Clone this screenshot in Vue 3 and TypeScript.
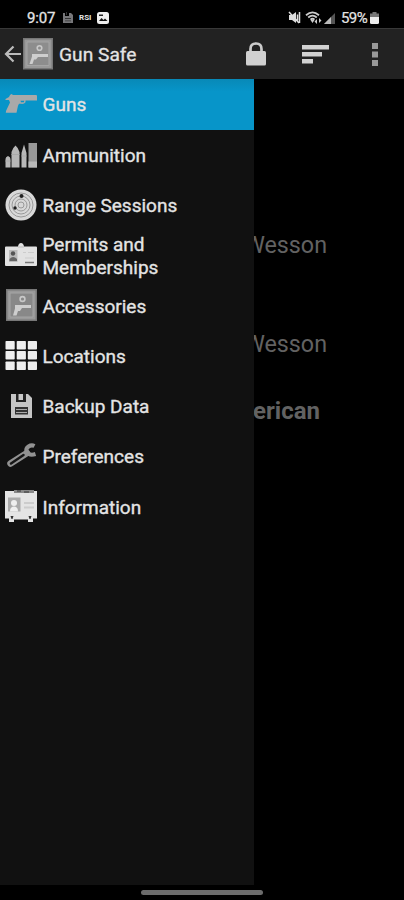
<script setup lang="ts">
interface MenuItem {
  label: string
  icon: string
}

const menu: MenuItem[] = [
  { label: 'Guns', icon: 'gun' },
  { label: 'Ammunition', icon: 'ammo' },
  { label: 'Range Sessions', icon: 'target' },
  { label: 'Permits and Memberships', icon: 'permit' },
  { label: 'Accessories', icon: 'safe' },
  { label: 'Locations', icon: 'grid' },
  { label: 'Backup Data', icon: 'disk' },
  { label: 'Preferences', icon: 'wrench' },
  { label: 'Information', icon: 'info' },
]
const active = 'Guns'
const columns = [0.5, 11.7, 22.8]
const rows = [1, 11, 21.5]
</script>

<template>
  <div class="screen">
    <header class="status">
      <span class="clock">9:07</span>
      <svg class="s-disk" width="10" height="11" viewBox="0 0 10 11"><path d="M0 1h2v3h4V1h2l2 2v8H0z" fill="#77777a" /><path d="M3 0h1v3H3zM2 6h6v1H2zM2 8.500h6v.8H2z" fill="#333" /></svg>
      <span class="rsi">RSI</span>
      <svg class="s-pic" width="12" height="12" viewBox="0 0 12 12"><rect width="12" height="12" rx="2.500" fill="#eee" /><path d="M2 9l2.500-3 2 2 1.500-1.500L10.500 9z" fill="#111" /><rect x="2" y="2.500" width="4" height="1.500" fill="#222" /></svg>
      <span class="grow"></span>
      <svg width="13" height="13" viewBox="0 0 13 13"><path d="M1 4h3l4-3v11L4 9H1z" fill="#ddd" /><path d="M1 1l10 11M9.500 3.500v6M11.500 1v11" stroke="#ddd" stroke-width="1.500" /></svg>
      <svg class="s-wifi" width="17" height="13" viewBox="0 0 17 13"><path d="M1 4.200Q7.500-1.500 14 4.200M3.200 6.500q4.300-3.800 8.600 0M5.500 8.700q2-1.800 4 0" fill="none" stroke="#ccc" stroke-width="1.800" /><path d="M7.500 12L5.500 9h4zM12 8v5l-2.500-2.500zM14 12V7l2.500 2.500z" fill="#ccc" /></svg>
      <svg class="s-cell" width="11" height="12" viewBox="0 0 11 12"><path d="M0 12L11 1v11z" fill="#555" /><path d="M0 12l7-7v7z" fill="#bbb" /></svg>
      <span class="percent">59%</span>
      <svg class="s-bat" width="9" height="12" viewBox="0 0 9 12"><path d="M2.500 0h4v1.500H9V6H0V1.500h2.500z" fill="#777" /><path d="M0 5h9v5.500Q9 12 7.500 12h-6Q0 12 0 10.500z" fill="#eee" /></svg>
    </header>

    <nav class="appbar">
      <svg class="back" width="17" height="18" viewBox="0 0 17 18"><path d="M17 9H2M9.500 1.500L2 9l7.500 7.500" fill="none" stroke="#bbb" stroke-width="2.200" /></svg>
      <svg class="logo" width="30" height="32" viewBox="0 0 30 32">
        <rect width="30" height="31.500" fill="#777" /><rect x="1.500" y="1.500" width="27" height="28.500" fill="#999" /><path d="M4 27.500V4h22v23.500z" fill="#8d8d8d" stroke="#a5a5a5" />
        <circle cx="16.500" cy="10" r="2.300" fill="none" stroke="#c8c8c8" stroke-width="1.600" /><path d="M9 16h16v3H15l-2 2.500h-2L9.500 26H6.500L9 18.500z" fill="#cecece" />
      </svg>
      <h1>Gun Safe</h1>
      <span class="grow"></span>
      <svg class="lock" width="20" height="24" viewBox="0 0 20 24"><path d="M4.500 11V7Q4.500 1.500 10 1.500T15.500 7v4" fill="none" stroke="#ccc" stroke-width="2.700" /><rect y="9" width="20" height="14.500" rx="1.500" fill="#d0d0d0" /></svg>
      <svg class="sort" width="27" height="19" viewBox="0 0 27 19"><path d="M0 0h27v4.500H0zM0 7h20v4.500H0zM0 14h11v4.500H0z" fill="#d2d2d2" /></svg>
      <svg class="dots" width="6" height="23" viewBox="0 0 6 23"><path d="M0 0h6v6H0zM0 8.500h6v6H0zM0 17h6v6H0z" fill="#999" /></svg>
    </nav>

    <main class="body">
      <ul class="drawer">
        <li v-for="item in menu" :key="item.label" :class="{ active: item.label === active }">
          <svg class="icon" width="32" height="32" viewBox="0 0 32 32">
            <template v-if="item.icon === 'gun'">
              <path d="M5 7l1.500-1 1.500 1h23.500l.5 1v4.500H20.500v1.800q-1.500 2-4.500 1.500h-2l-1 2-1.500 7H.8l.3-2L5 14.500 4 12H.5v-1L4 9z" fill="#a9a9a9" /><path d="M15.500 12.700h3.800l-.5 1.600H16z" fill="#0795c9" />
            </template>
            <template v-else-if="item.icon === 'ammo'">
              <path d="M.5 28.500V20q0-2 2.500-3 2.500 1 2.500 3v8.500zM6.500 28.500V13q1-4 4-6.500 3 2.500 4 6.500v15.500zM16.500 28.500V14L19 5.500 21.500 14v14.500z" fill="#b8b8b8" /><rect x="23.500" y="4" width="8.500" height="24.500" fill="#989898" /><path d="M23.500 22.500H32v6h-8.500z" fill="#b9b9b9" /><path d="M.5 22h5M6.500 15.500h8M16.500 17h5" stroke="#aaa" />
            </template>
            <template v-else-if="item.icon === 'target'">
              <circle cx="16" cy="16" r="15.500" fill="#d8d8d8" /><g fill="none" stroke="#999" stroke-width="1"><circle cx="16" cy="16" r="12" /><circle cx="16" cy="16" r="9" /><circle cx="16" cy="16" r="6" /><circle cx="16" cy="16" r="3" /></g><circle cx="16.500" cy="7" r="2" fill="#222" /><circle cx="10" cy="19" r="1.700" fill="#222" />
            </template>
            <template v-else-if="item.icon === 'permit'">
              <path d="M0 8.500q0-1 1-1h12Q13.500 4 16 4t3 3.500h12q1 0 1 1V26q0 1-1 1H1q-1 0-1-1z" fill="#e2e2e2" /><path d="M13 8h6" stroke="#bbb" /><rect x="4" y="11" width="8.500" height="12" fill="#bbb" /><circle cx="8" cy="14.500" r="2.200" fill="#555" /><path d="M4.500 22v-2q3.500-4 7.500 0v2z" fill="#666" /><path d="M18 13.500h3M23 13.500h6M20 19h9" stroke="#ccc" /><path d="M20 23.500h9" stroke="#777" stroke-width="1.500" />
            </template>
            <template v-else-if="item.icon === 'safe'">
              <rect x="1" width="31" height="32" fill="#777" /><rect x="2.500" y="1.500" width="28" height="29" fill="#999" /><path d="M5 28V4h23v24z" fill="#888" stroke="#a5a5a5" /><circle cx="17.500" cy="10" r="2.400" fill="none" stroke="#c8c8c8" stroke-width="1.600" /><path d="M10 16h16v3h-9l-2 3h-2l-1.500 4.500H8l2-7z" fill="#cecece" />
            </template>
            <template v-else-if="item.icon === 'grid'">
              <template v-for="y in rows" :key="y"><rect v-for="x in columns" :key="x" :x="x" :y="y" width="9.200" height="8.500" rx=".8" fill="#eee" /></template>
            </template>
            <template v-else-if="item.icon === 'disk'">
              <path d="M6 4h17l4 4v20H6z" fill="#c5c5c5" /><path d="M11 4h10v8H11z" fill="#222" /><path d="M13.500 4h4.500v6h-4.500z" fill="#c9c9c9" /><path d="M10 17h13v7.500H10z" fill="#333" /><path d="M11 19.500h11M11 22.500h11" stroke="#aaa" />
            </template>
            <template v-else-if="item.icon === 'wrench'">
              <path d="M5.500 23.500L22 13" stroke="#929292" stroke-width="6.500" stroke-linecap="round" /><path d="M6 23.500l12.500-8.500" stroke="#151515" stroke-width="2.500" stroke-linecap="round" /><path d="M29.500 6q-3-1.500-6 .5t-2 5.500q3 4 9 2" fill="none" stroke="#929292" stroke-width="4" />
            </template>
            <template v-else>
              <path d="M0 1h32v27.500h-4V32h-5v-2.500H9V32H4v-3.500H0z" fill="#e4e4e4" /><path d="M9 0h20v3H9z" fill="#888" /><path d="M12 1h4M19 2h5" stroke="#333" /><rect x="3" y="7.500" width="12.500" height="14" fill="#aaa" /><circle cx="9" cy="13" r="3" fill="#eee" /><path d="M5 21.500q0-5 4-5t4 5z" fill="#eee" /><path d="M19 13h10M19 17.500h10" stroke="#ccc" stroke-width="2" /><path d="M5.500 26h3l-1 3h-1zM23.500 26h3l-1 3h-1z" fill="#333" />
            </template>
          </svg>
          <span>{{ item.label }}</span>
        </li>
      </ul>
      <section class="list">
        <p>Wesson</p>
        <p>Wesson</p>
        <p class="bold">erican</p>
      </section>
    </main>
    <footer class="home"><i></i></footer>
  </div>
</template>

<style>
body {
  background: #000;
}
</style>

<style scoped>
.screen {
  width: 404px;
  height: 900px;
  overflow: hidden;
  display: flex;
  flex-direction: column;
  background: #000;
  font-family: Roboto, 'Liberation Sans', sans-serif;
  color: #e4e4e4;
}
.grow {
  flex: 1;
}
.status {
  height: 28px;
  box-sizing: border-box;
  padding: 7px 25px 0 27px;
  display: flex;
  align-items: center;
}
.clock {
  width: 29px;
  font-size: 15px;
  letter-spacing: -0.2px;
  white-space: nowrap;
  -webkit-text-stroke: 0.3px;
}
.s-disk {
  margin-left: 7px;
}
.rsi {
  width: 13px;
  margin-left: 6px;
  font-size: 8px;
  font-weight: 700;
}
.s-pic {
  margin-left: 5px;
}
.s-wifi {
  margin-left: 4px;
}
.s-cell {
  margin-left: 2px;
}
.percent {
  width: 27px;
  margin-left: 6px;
  font-size: 15px;
  letter-spacing: -0.6px;
  -webkit-text-stroke: 0.2px;
}
.s-bat {
  margin-left: 2px;
}
.appbar {
  height: 51px;
  box-sizing: border-box;
  display: flex;
  align-items: center;
  padding: 0 26px 0 4px;
  border-top: 1px solid #383838;
  background: #222;
}
.logo {
  margin-left: 2px;
}
h1 {
  margin: 1px 0 0 6px;
  font-size: 19.2px;
  font-weight: 400;
  line-height: 24px;
  -webkit-text-stroke: 0.3px;
}
.sort {
  margin-left: 36px;
}
.dots {
  margin-left: 43px;
}
.body {
  height: 806px;
  display: flex;
}
.drawer {
  flex: none;
  position: relative;
  z-index: 1;
  width: 253.5px;
  box-sizing: border-box;
  margin: 0;
  padding: 0;
  list-style: none;
  background: #111;
}
.drawer li {
  height: 50.25px;
  box-sizing: border-box;
  display: flex;
  align-items: center;
  gap: 5.5px;
  padding: 1px 60px 0 5px;
  font-size: 19px;
  line-height: 22.500px;
  -webkit-text-stroke: 0.35px;
}
.drawer li.active {
  height: 51px;
  background: linear-gradient(#0889b7, #0795c9 25%);
}
.drawer li span {
  margin-top: 1px;
}
.icon {
  flex: none;
  margin-top: -2px;
}
.list {
  flex: 1;
  min-width: 0;
  display: flex;
  flex-direction: column;
  align-items: flex-end;
  padding: 151px 77px 0 0;
  color: #626262;
  font-size: 23.3px;
  line-height: 30px;
}
.list p {
  margin: 0 0 69px;
}
.list .bold {
  margin: -32px 7px 0 0;
  font-size: 24px;
  font-weight: 700;
}
.home {
  height: 15px;
  display: flex;
  justify-content: center;
  align-items: center;
}
.home i {
  width: 122px;
  height: 5px;
  border-radius: 3px;
  background: #6c6c6c;
}
</style>
